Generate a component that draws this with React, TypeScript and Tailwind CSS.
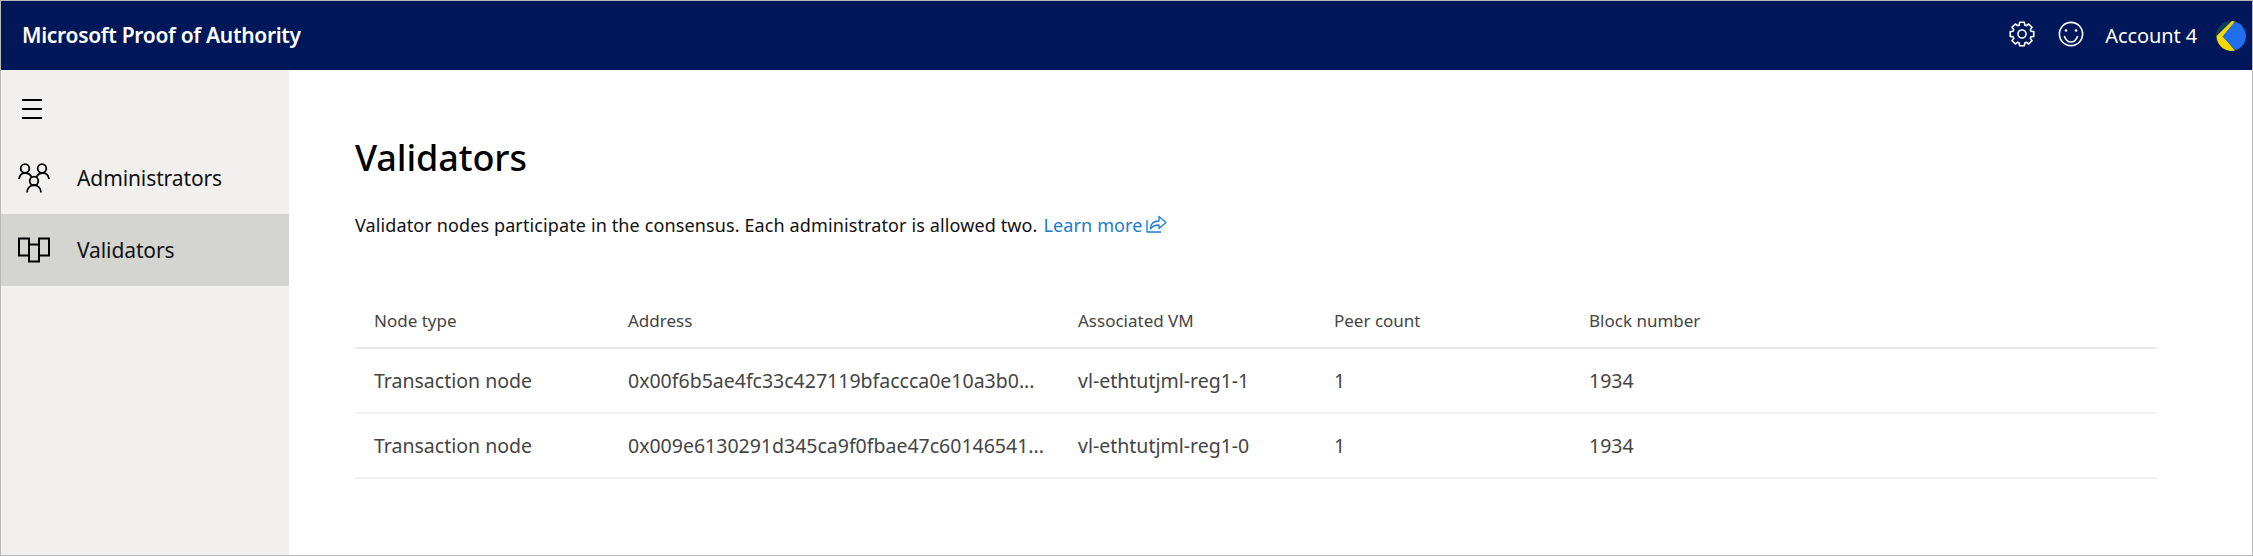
const rows = [
  {
    type: "Transaction node",
    address: "0x00f6b5ae4fc33c427119bfaccca0e10a3b0...",
    vm: "vl-ethtutjml-reg1-1",
    peers: "1",
    block: "1934",
  },
  {
    type: "Transaction node",
    address: "0x009e6130291d345ca9f0fbae47c60146541...",
    vm: "vl-ethtutjml-reg1-0",
    peers: "1",
    block: "1934",
  },
];

// eight-tooth gear outline
function gearPath() {
  const pts: string[] = [];
  for (let i = 0; i < 8; i++) {
    const a = (i * Math.PI) / 4;
    const corners: [number, number][] = [
      [9.4, -0.3],
      [12, -0.2],
      [12, 0.2],
      [9.4, 0.3],
    ];
    for (const [r, d] of corners) {
      const x = 13 + r * Math.cos(a + d);
      const y = 13 + r * Math.sin(a + d);
      pts.push(x.toFixed(2) + " " + y.toFixed(2));
    }
  }
  return "M" + pts.join("L") + "Z";
}

function GearIcon() {
  return (
    <svg width="26" height="26" viewBox="0 0 26 26" fill="none" stroke="white" strokeWidth="1.6" strokeLinejoin="round">
      <path d={gearPath()} />
      <circle cx="13" cy="13" r="4" />
    </svg>
  );
}

function SmileIcon() {
  return (
    <svg width="26" height="26" viewBox="0 0 26 26" fill="none" stroke="white" strokeWidth="1.6" strokeLinecap="round">
      <circle cx="13" cy="13" r="11.6" />
      <path d="M6.5 15.500c1.200 3.400 3.600 5.500 6.500 5.500s5.300-2.100 6.500-5.500" />
      <circle cx="8" cy="9.500" r="1.300" fill="white" stroke="none" />
      <circle cx="18" cy="9.500" r="1.300" fill="white" stroke="none" />
    </svg>
  );
}

function AccountLogo() {
  return (
    <svg width="30" height="30" viewBox="0 0 30 30">
      <circle cx="15" cy="15" r="15" fill="#0f3d5c" />
      <path d="M16 0.100 L0.500 15 A15 15 0 0 0 19 29.500 L7 15.500 L19 0.500 Z" fill="#f5d800" />
      <path d="M19 0.600 A15 15 0 0 1 19.500 29.300 L6.500 15.500 Z" fill="#1f6fef" />
    </svg>
  );
}

function AdminsIcon() {
  return (
    <svg width="32" height="30" viewBox="0 0 32 30" fill="none" stroke="black" strokeWidth="1.8">
      <circle cx="7" cy="5.500" r="4.300" />
      <circle cx="24" cy="5.500" r="4.300" />
      <circle cx="16" cy="18" r="4.300" />
      <path d="M1 16c.4-3.500 2.800-6 6-6s5.500 1.800 6.500 4M31 16c-.4-3.500-2.800-6-6-6s-5.500 1.800-6.500 4M9 29.500c0-4 3-7.500 7-7.500s7 3.500 7 7.500" />
    </svg>
  );
}

function ValidatorsIcon() {
  return (
    <svg width="32" height="26" viewBox="0 0 32 26" fill="none" stroke="black" strokeWidth="2">
      <path d="M1 1.500h10v17H1zM21 1.500h10v17H21zM11 7.500h10v17H11z" />
    </svg>
  );
}

function ShareIcon() {
  return (
    <svg width="22" height="20" viewBox="0 0 22 20" fill="none" stroke="#1a7ad4" strokeWidth="1.300" strokeLinejoin="round">
      <path d="M1 6v12h14" />
      <path d="M4.500 15c0-5 3-8 8.500-8V2.500l7 6-7 6V11c-4 0-6.500 1-8.500 4z" />
    </svg>
  );
}

export default function App() {
  return (
    <div className="h-[556px] w-[2253px] overflow-hidden border border-[#b9b9b9] bg-white font-['Noto_Sans',sans-serif] text-black">
      <header className="flex h-[69px] items-center justify-between bg-[#00175a] pl-[21px] pr-[6px] text-white">
        <div className="text-[21px] font-semibold tracking-[-0.3px]">Microsoft Proof of Authority</div>
        <div className="flex items-center">
          <div className="-mt-[3px]">
            <GearIcon />
          </div>
          <div className="ml-[23px] -mt-[3px]">
            <SmileIcon />
          </div>
          <span className="ml-[21px] text-[20px] tracking-[-0.1px]">Account 4</span>
          <div className="ml-[19px]">
            <AccountLogo />
          </div>
        </div>
      </header>
      <div className="flex h-[485px]">
        {/* Sidebar */}
        <nav className="w-[288px] shrink-0 bg-[#f1f0ee]">
          <div className="flex h-[72px] flex-col justify-center gap-[7px] pl-[21px] pt-[5px]">
            <div className="h-[2px] w-[20px] bg-black" />
            <div className="h-[2px] w-[20px] bg-black" />
            <div className="h-[2px] w-[20px] bg-black" />
          </div>
          <div className="flex h-[72px] items-center pl-[17px]">
            <AdminsIcon />
            <span className="ml-[27px] pt-[2px] text-[21px] tracking-[-0.1px] text-[#111]">Administrators</span>
          </div>
          <div className="flex h-[72px] items-center bg-[#d4d5d0] pl-[17px]">
            <ValidatorsIcon />
            <span className="ml-[27px] pt-[2px] text-[21px] tracking-[-0.1px] text-[#111]">Validators</span>
          </div>
        </nav>
        {/* Main content */}
        <main className="flex-1 pl-[66px] pr-[95px] pt-[63px]">
          <h1 className="text-[36px] leading-[50px] font-medium tracking-[-0.1px]">Validators</h1>
          <p className="mt-[28px] flex items-center text-[18px] leading-[28px] tracking-[0.12px] text-[#111]">
            Validator nodes participate in the consensus. Each administrator is allowed two.
            <span className="ml-[6px] text-[#1a7ad4]">Learn more</span>
            <span className="ml-[3px] -mt-[3px]">
              <ShareIcon />
            </span>
          </p>
          <div className="mt-[52px]">
            <div className="grid h-[58px] grid-cols-[254px_450px_256px_255px_1fr] items-center border-b-2 border-[#e9e9e9] pl-[19px] pt-[4px] text-[17px] text-[#444]">
              <div>Node type</div>
              <div>Address</div>
              <div>Associated VM</div>
              <div>Peer count</div>
              <div>Block number</div>
            </div>
            {rows.map((row) => (
              <div
                key={row.address}
                className="grid h-[65px] grid-cols-[254px_450px_256px_255px_1fr] items-center border-b-2 border-[#f1f1f1] pl-[19px] text-[19.5px] text-[#444]"
              >
                <div>{row.type}</div>
                <div className="whitespace-nowrap">{row.address}</div>
                <div>{row.vm}</div>
                <div>{row.peers}</div>
                <div>{row.block}</div>
              </div>
            ))}
          </div>
        </main>
      </div>
    </div>
  );
}
